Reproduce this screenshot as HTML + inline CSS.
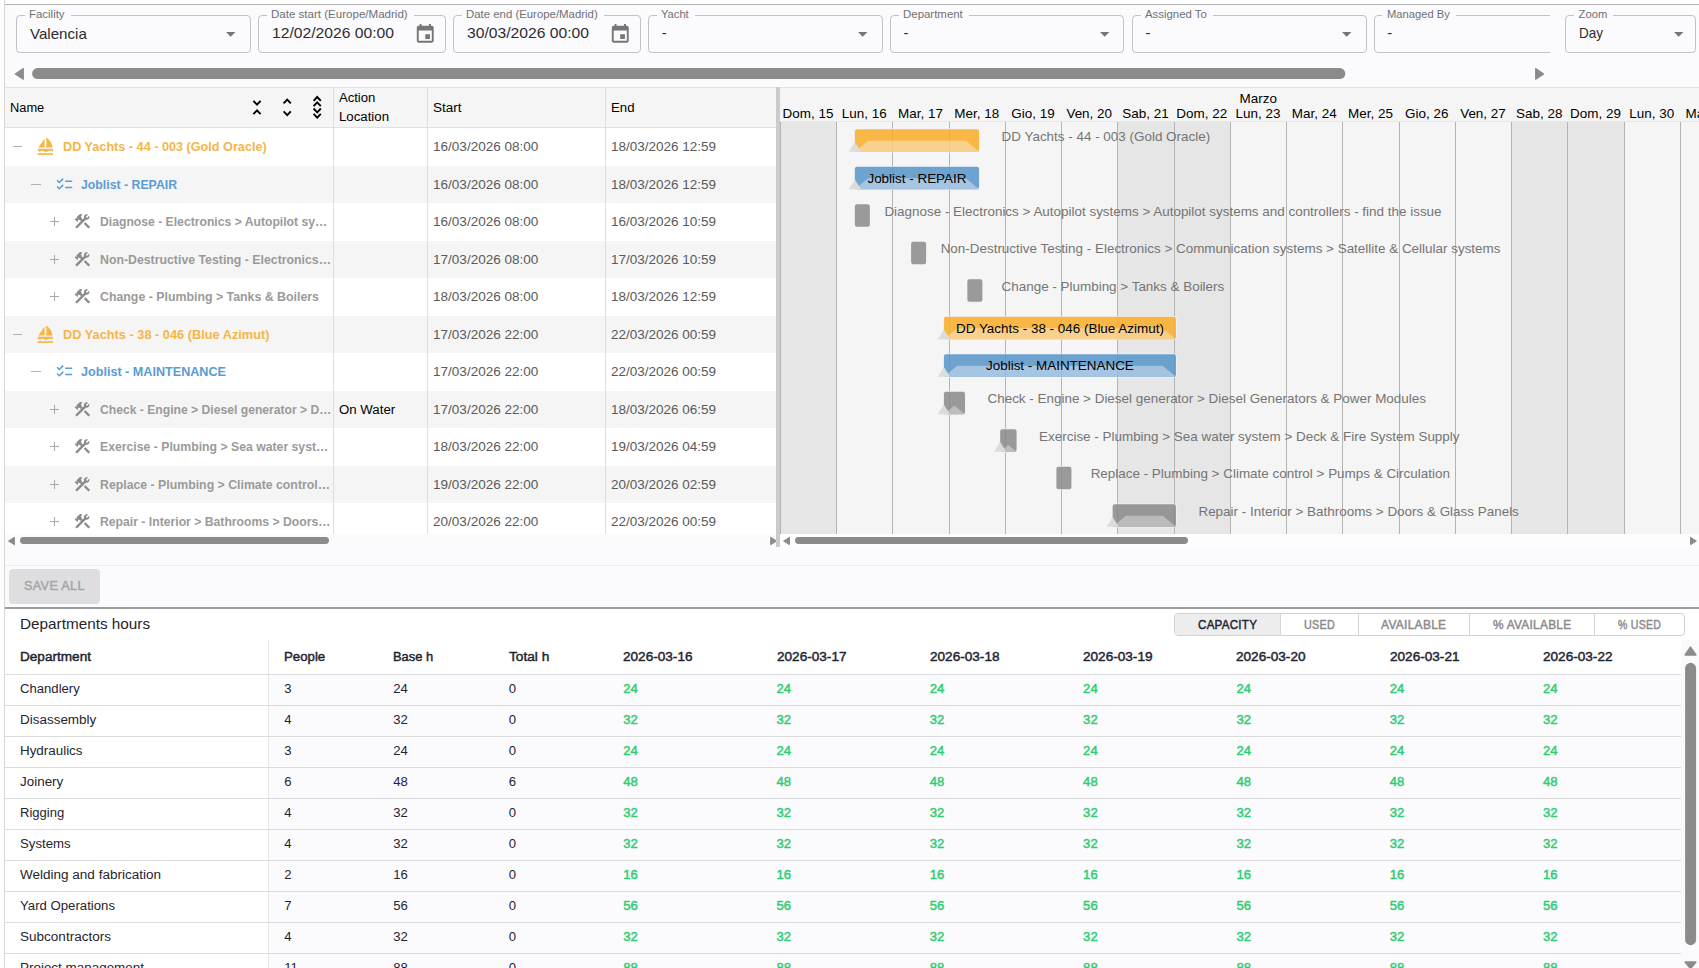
<!DOCTYPE html>
<html lang="en"><head><meta charset="utf-8"><title>Planning</title>
<style>
html,body{margin:0;padding:0;background:#fff;}
body{width:1699px;height:968px;overflow:hidden;position:relative;font-family:"Liberation Sans",sans-serif;}
.t{position:absolute;white-space:pre;}
.abs,.abs>*{position:absolute;}
div{box-sizing:border-box;}
svg{position:absolute;overflow:visible;}
</style></head><body>

<div class="abs" id="panel" style="left:5px;top:4px;width:1694px;height:964px;background:#fbfbfd;border-top:1px solid #b0b0b0;"></div>
<div class="abs" style="left:4px;top:0;width:1px;height:968px;background:#d6d6d6;"></div>
<div id="filters">
<div class="abs" style="left:16.00px;top:15.0px;width:235.20px;height:38.0px;border:1px solid #c2c2c4;border-radius:4px;"></div><div class="abs" style="left:24.90px;top:14.0px;width:46.10px;height:3px;background:#fbfbfd;"></div><span class="t " style="left:29.40px;top:7px;font-size:11.25px;line-height:14.62px;color:#707074;transform:scaleX(1.0167);transform-origin:0 50%;">Facility</span><span class="t " style="left:29.80px;top:24px;font-size:15px;line-height:19.5px;color:#2c2c30;transform:scaleX(1.0064);transform-origin:0 50%;">Valencia</span><svg style="left:226.30px;top:32.1px" width="9.4" height="4.7" viewBox="0 0 10 5"><path d="M0 0L5 5L10 0z" fill="#757575"/></svg>
<div class="abs" style="left:257.90px;top:15.0px;width:188.10px;height:38.0px;border:1px solid #c2c2c4;border-radius:4px;"></div><div class="abs" style="left:266.80px;top:14.0px;width:147.20px;height:3px;background:#fbfbfd;"></div><span class="t " style="left:271.30px;top:7px;font-size:11.25px;line-height:14.62px;color:#707074;transform:scaleX(1.0264);transform-origin:0 50%;">Date start (Europe/Madrid)</span><span class="t " style="left:271.70px;top:23px;font-size:15px;line-height:19.5px;color:#2c2c30;transform:scaleX(1.0451);transform-origin:0 50%;">12/02/2026 00:00</span><svg style="left:414.10px;top:23.05px" width="22.5" height="22.5" viewBox="0 0 24 24"><path fill="#757575" d="M17 12h-5v5h5v-5zM16 1v2H8V1H6v2H5c-1.11 0-1.99.9-1.99 2L3 19c0 1.1.89 2 2 2h14c1.1 0 2-.9 2-2V5c0-1.1-.9-2-2-2h-1V1h-2zm3 18H5V8h14v11z"/></svg>
<div class="abs" style="left:452.90px;top:15.0px;width:188.10px;height:38.0px;border:1px solid #c2c2c4;border-radius:4px;"></div><div class="abs" style="left:461.80px;top:14.0px;width:142.20px;height:3px;background:#fbfbfd;"></div><span class="t " style="left:466.30px;top:7px;font-size:11.25px;line-height:14.62px;color:#707074;transform:scaleX(1.0125);transform-origin:0 50%;">Date end (Europe/Madrid)</span><span class="t " style="left:466.70px;top:23px;font-size:15px;line-height:19.5px;color:#2c2c30;transform:scaleX(1.0451);transform-origin:0 50%;">30/03/2026 00:00</span><svg style="left:609.10px;top:23.05px" width="22.5" height="22.5" viewBox="0 0 24 24"><path fill="#757575" d="M17 12h-5v5h5v-5zM16 1v2H8V1H6v2H5c-1.11 0-1.99.9-1.99 2L3 19c0 1.1.89 2 2 2h14c1.1 0 2-.9 2-2V5c0-1.1-.9-2-2-2h-1V1h-2zm3 18H5V8h14v11z"/></svg>
<div class="abs" style="left:647.90px;top:15.0px;width:235.10px;height:38.0px;border:1px solid #c2c2c4;border-radius:4px;"></div><div class="abs" style="left:656.80px;top:14.0px;width:38.20px;height:3px;background:#fbfbfd;"></div><span class="t " style="left:661.30px;top:7px;font-size:11.25px;line-height:14.62px;color:#707074;transform:scaleX(0.9915);transform-origin:0 50%;">Yacht</span><span class="t " style="left:661.70px;top:23px;font-size:15px;line-height:19.5px;color:#2c2c30;">-</span><svg style="left:858.10px;top:32.1px" width="9.4" height="4.7" viewBox="0 0 10 5"><path d="M0 0L5 5L10 0z" fill="#757575"/></svg>
<div class="abs" style="left:889.80px;top:15.0px;width:234.00px;height:38.0px;border:1px solid #c2c2c4;border-radius:4px;"></div><div class="abs" style="left:898.70px;top:14.0px;width:70.30px;height:3px;background:#fbfbfd;"></div><span class="t " style="left:903.20px;top:7px;font-size:11.25px;line-height:14.62px;color:#707074;transform:scaleX(1.0173);transform-origin:0 50%;">Department</span><span class="t " style="left:903.60px;top:23px;font-size:15px;line-height:19.5px;color:#2c2c30;">-</span><svg style="left:1099.60px;top:32.1px" width="9.4" height="4.7" viewBox="0 0 10 5"><path d="M0 0L5 5L10 0z" fill="#757575"/></svg>
<div class="abs" style="left:1131.70px;top:15.0px;width:235.00px;height:38.0px;border:1px solid #c2c2c4;border-radius:4px;"></div><div class="abs" style="left:1140.60px;top:14.0px;width:72.40px;height:3px;background:#fbfbfd;"></div><span class="t " style="left:1145.10px;top:7px;font-size:11.25px;line-height:14.62px;color:#707074;transform:scaleX(1.0132);transform-origin:0 50%;">Assigned To</span><span class="t " style="left:1145.50px;top:23px;font-size:15px;line-height:19.5px;color:#2c2c30;">-</span><svg style="left:1341.80px;top:32.1px" width="9.4" height="4.7" viewBox="0 0 10 5"><path d="M0 0L5 5L10 0z" fill="#757575"/></svg>
<div class="abs" style="left:1373.50px;top:15.0px;width:176.80px;height:38.0px;overflow:hidden;"><div style="left:0;top:0;width:234.40px;height:38.0px;border:1px solid #c2c2c4;border-radius:4px;position:absolute;"></div></div><div class="abs" style="left:1382.40px;top:14.0px;width:73.30px;height:3px;background:#fbfbfd;"></div><span class="t " style="left:1386.90px;top:7px;font-size:11.25px;line-height:14.62px;color:#707074;transform:scaleX(0.9941);transform-origin:0 50%;">Managed By</span><span class="t " style="left:1387.30px;top:23px;font-size:15px;line-height:19.5px;color:#2c2c30;">-</span>
<div class="abs" style="left:1564.70px;top:15.0px;width:131.30px;height:38.0px;border:1px solid #c2c2c4;border-radius:4px;"></div><div class="abs" style="left:1574.10px;top:14.0px;width:39.30px;height:3px;background:#fbfbfd;"></div><span class="t " style="left:1578.60px;top:7px;font-size:11.25px;line-height:14.62px;color:#707074;">Zoom</span><span class="t " style="left:1579.00px;top:23px;font-size:15px;line-height:19.5px;color:#2c2c30;transform:scaleX(0.8993);transform-origin:0 50%;">Day</span><svg style="left:1674.10px;top:32.1px" width="9.4" height="4.7" viewBox="0 0 10 5"><path d="M0 0L5 5L10 0z" fill="#757575"/></svg>
</div>
<svg id="sb" style="left:0;top:0" width="1699" height="968">
<polygon points="15.30,73.90 23.30,68.60 23.30,79.20" fill="#8b8b8b" stroke="#8b8b8b" stroke-width="1.2" stroke-linejoin="round"/>
<rect x="32.1" y="68.1" width="1313.2" height="11" rx="5.5" fill="#8b8b8b"/>
<polygon points="1543.60,73.90 1535.70,68.60 1535.70,79.20" fill="#8b8b8b" stroke="#8b8b8b" stroke-width="1.2" stroke-linejoin="round"/>
</svg>
<div id="tree" class="abs" style="left:5.0px;top:87.0px;width:771.0px;height:446.80px;overflow:hidden;background:#fff;">
<div style="left:0;top:0;width:100%;height:41.0px;background:#f5f5f5;border-top:1px solid #e2e2e2;border-bottom:1px solid #e0e0e0;"></div>
<div style="left:0;top:79.00px;width:100%;height:37px;background:#f5f5f5;"></div>
<div style="left:0;top:154.00px;width:100%;height:37px;background:#f5f5f5;"></div>
<div style="left:0;top:229.00px;width:100%;height:37px;background:#f5f5f5;"></div>
<div style="left:0;top:304.00px;width:100%;height:37px;background:#f5f5f5;"></div>
<div style="left:0;top:379.00px;width:100%;height:37px;background:#f5f5f5;"></div>
<div style="left:328.20px;top:0;width:1px;height:100%;background:#dedede;"></div>
<div style="left:422.00px;top:0;width:1px;height:100%;background:#dedede;"></div>
<div style="left:600.00px;top:0;width:1px;height:100%;background:#dedede;"></div>
</div>
<div id="treehead">
<span class="t " style="left:10.30px;top:99px;font-size:13.125px;line-height:17.06px;color:#000;transform:scaleX(0.9776);transform-origin:0 50%;">Name</span>
<span class="t " style="left:338.90px;top:89px;font-size:13.125px;line-height:17.06px;color:#000;">Action</span>
<span class="t " style="left:338.90px;top:108px;font-size:13.125px;line-height:17.06px;color:#000;transform:scaleX(1.0085);transform-origin:0 50%;">Location</span>
<span class="t " style="left:432.60px;top:99px;font-size:13.125px;line-height:17.06px;color:#000;transform:scaleX(1.0293);transform-origin:0 50%;">Start</span>
<span class="t " style="left:610.70px;top:99px;font-size:13.125px;line-height:17.06px;color:#000;transform:scaleX(1.0074);transform-origin:0 50%;">End</span>
<svg style="left:0;top:0" width="400" height="130" fill="none" stroke="#000" stroke-width="1.9" stroke-linecap="butt" stroke-linejoin="miter">
<path d="M253.40 100.80L257.00 104.60L260.60 100.80 M253.40 114.20L257.00 110.40L260.60 114.20"/>
<path d="M283.60 103.40L287.20 99.60L290.80 103.40 M283.60 111.40L287.20 115.20L290.80 111.40"/>
<path d="M313.60 100.80L317.20 97.00L320.80 100.80 M313.60 106.20L317.20 102.40L320.80 106.20 M313.60 108.50L317.20 112.30L320.80 108.50 M313.60 113.90L317.20 117.70L320.80 113.90"/>
</svg>
</div>
<div id="treerows" class="abs" style="left:0;top:0;width:776.0px;height:533.8px;overflow:hidden;">
<div style="position:absolute;left:12.60px;top:146.20px;width:9.2px;height:1.1px;background:#b0b0b0;"></div>
<svg style="left:36.20px;top:137.35px" width="18.75" height="18.75" viewBox="0 0 24 24"><path fill="#f5b548" d="M11 13.5V2L3 13.5h8zm10 0C21 6.5 14.5 1 12.5 1c0 0 1 3 1 6.5s-1 6-1 6H21zm1 1.5H2c.31 1.53 1.16 2.84 2.33 3.73.41-.15.83-.3 1.16-.61.69-.63 1.5-.62 2.51-.62 1.05 0 1.8-.01 2.51.62.69.61 1.55.62 2.49.62.93 0 1.79-.01 2.49-.62.7-.63 1.45-.62 2.51-.62.96 0 1.82-.02 2.52.62.32.29.74.46 1.15.6C20.84 17.84 21.69 16.53 22 15zm0 8v-2h-1c-1.04 0-2.08-.35-3-1-1.83 1.3-4.17 1.3-6 0-1.83 1.3-4.17 1.3-6 0-.91.65-1.96 1-3 1H2v2h1c1.03 0 2.05-.25 3-.75 1.89 1 4.11 1 6 0 1.89 1 4.11 1 6 0 .95.5 1.97.75 3 .75h1z"/></svg>
<span class="t " style="left:62.50px;top:138px;font-size:13.125px;line-height:17.06px;color:#f5b548;font-weight:bold;transform:scaleX(0.9652);transform-origin:0 50%;">DD Yachts - 44 - 003 (Gold Oracle)</span>
<span class="t " style="left:432.60px;top:138px;font-size:13.125px;line-height:17.06px;color:#5a5a5a;transform:scaleX(1.0327);transform-origin:0 50%;">16/03/2026 08:00</span>
<span class="t " style="left:610.70px;top:138px;font-size:13.125px;line-height:17.06px;color:#5a5a5a;transform:scaleX(1.0298);transform-origin:0 50%;">18/03/2026 12:59</span>
<div style="position:absolute;left:31.35px;top:184.20px;width:9.2px;height:1.1px;background:#b0b0b0;"></div>
<svg style="left:54.95px;top:175.35px" width="18.75" height="18.75" viewBox="0 0 24 24"><path fill="#5a9bd3" d="M22 7h-9v2h9V7zm0 8h-9v2h9v-2zM5.54 11 2 7.46l1.41-1.41 2.12 2.12 4.24-4.24 1.41 1.41L5.54 11zm0 8L2 15.46l1.41-1.41 2.12 2.12 4.24-4.24 1.41 1.41L5.54 19z"/></svg>
<span class="t " style="left:81.25px;top:176px;font-size:13.125px;line-height:17.06px;color:#5a9bd3;font-weight:bold;transform:scaleX(0.9374);transform-origin:0 50%;">Joblist - REPAIR</span>
<span class="t " style="left:432.60px;top:176px;font-size:13.125px;line-height:17.06px;color:#5a5a5a;transform:scaleX(1.0327);transform-origin:0 50%;">16/03/2026 08:00</span>
<span class="t " style="left:610.70px;top:176px;font-size:13.125px;line-height:17.06px;color:#5a5a5a;transform:scaleX(1.0298);transform-origin:0 50%;">18/03/2026 12:59</span>
<div style="position:absolute;left:50.00px;top:221.20px;width:9.4px;height:1.1px;background:#a8a8a8;"></div>
<div style="position:absolute;left:54.15px;top:217.05px;width:1.1px;height:9.4px;background:#a8a8a8;"></div>
<svg style="left:72.80px;top:212.35px" width="18.75" height="18.75" viewBox="0 0 24 24"><path fill="#8a8a8a" d="m13.783 15.172 2.121-2.121 5.996 5.996-2.121 2.121zM17.5 10c1.93 0 3.5-1.57 3.5-3.5 0-.58-.16-1.12-.41-1.6l-2.7 2.7-1.49-1.49 2.7-2.7c-.48-.25-1.02-.41-1.6-.41C15.57 3 14 4.57 14 6.5c0 .41.08.8.21 1.16l-1.85 1.85-1.78-1.78.71-.71-1.41-1.41L12 3.49c-1.17-1.17-3.07-1.17-4.24 0L4.22 7.03l1.41 1.41H2.81l-.71.71 3.54 3.54.71-.71V9.15l1.41 1.41.71-.71 1.78 1.78-7.41 7.41 2.12 2.12L16.34 9.79c.36.13.75.21 1.16.21z"/></svg>
<span class="t " style="left:100.00px;top:213px;font-size:13.125px;line-height:17.06px;color:#9a9a9a;font-weight:bold;transform:scaleX(0.9287);transform-origin:0 50%;">Diagnose - Electronics &gt; Autopilot sy…</span>
<span class="t " style="left:432.60px;top:213px;font-size:13.125px;line-height:17.06px;color:#5a5a5a;transform:scaleX(1.0327);transform-origin:0 50%;">16/03/2026 08:00</span>
<span class="t " style="left:610.70px;top:213px;font-size:13.125px;line-height:17.06px;color:#5a5a5a;transform:scaleX(1.0298);transform-origin:0 50%;">16/03/2026 10:59</span>
<div style="position:absolute;left:50.00px;top:259.20px;width:9.4px;height:1.1px;background:#a8a8a8;"></div>
<div style="position:absolute;left:54.15px;top:255.05px;width:1.1px;height:9.4px;background:#a8a8a8;"></div>
<svg style="left:72.80px;top:250.35px" width="18.75" height="18.75" viewBox="0 0 24 24"><path fill="#8a8a8a" d="m13.783 15.172 2.121-2.121 5.996 5.996-2.121 2.121zM17.5 10c1.93 0 3.5-1.57 3.5-3.5 0-.58-.16-1.12-.41-1.6l-2.7 2.7-1.49-1.49 2.7-2.7c-.48-.25-1.02-.41-1.6-.41C15.57 3 14 4.57 14 6.5c0 .41.08.8.21 1.16l-1.85 1.85-1.78-1.78.71-.71-1.41-1.41L12 3.49c-1.17-1.17-3.07-1.17-4.24 0L4.22 7.03l1.41 1.41H2.81l-.71.71 3.54 3.54.71-.71V9.15l1.41 1.41.71-.71 1.78 1.78-7.41 7.41 2.12 2.12L16.34 9.79c.36.13.75.21 1.16.21z"/></svg>
<span class="t " style="left:100.00px;top:251px;font-size:13.125px;line-height:17.06px;color:#9a9a9a;font-weight:bold;transform:scaleX(0.9391);transform-origin:0 50%;">Non-Destructive Testing - Electronics…</span>
<span class="t " style="left:432.60px;top:251px;font-size:13.125px;line-height:17.06px;color:#5a5a5a;transform:scaleX(1.0327);transform-origin:0 50%;">17/03/2026 08:00</span>
<span class="t " style="left:610.70px;top:251px;font-size:13.125px;line-height:17.06px;color:#5a5a5a;transform:scaleX(1.0298);transform-origin:0 50%;">17/03/2026 10:59</span>
<div style="position:absolute;left:50.00px;top:296.20px;width:9.4px;height:1.1px;background:#a8a8a8;"></div>
<div style="position:absolute;left:54.15px;top:292.05px;width:1.1px;height:9.4px;background:#a8a8a8;"></div>
<svg style="left:72.80px;top:287.35px" width="18.75" height="18.75" viewBox="0 0 24 24"><path fill="#8a8a8a" d="m13.783 15.172 2.121-2.121 5.996 5.996-2.121 2.121zM17.5 10c1.93 0 3.5-1.57 3.5-3.5 0-.58-.16-1.12-.41-1.6l-2.7 2.7-1.49-1.49 2.7-2.7c-.48-.25-1.02-.41-1.6-.41C15.57 3 14 4.57 14 6.5c0 .41.08.8.21 1.16l-1.85 1.85-1.78-1.78.71-.71-1.41-1.41L12 3.49c-1.17-1.17-3.07-1.17-4.24 0L4.22 7.03l1.41 1.41H2.81l-.71.71 3.54 3.54.71-.71V9.15l1.41 1.41.71-.71 1.78 1.78-7.41 7.41 2.12 2.12L16.34 9.79c.36.13.75.21 1.16.21z"/></svg>
<span class="t " style="left:100.00px;top:288px;font-size:13.125px;line-height:17.06px;color:#9a9a9a;font-weight:bold;transform:scaleX(0.9419);transform-origin:0 50%;">Change - Plumbing &gt; Tanks &amp; Boilers</span>
<span class="t " style="left:432.60px;top:288px;font-size:13.125px;line-height:17.06px;color:#5a5a5a;transform:scaleX(1.0327);transform-origin:0 50%;">18/03/2026 08:00</span>
<span class="t " style="left:610.70px;top:288px;font-size:13.125px;line-height:17.06px;color:#5a5a5a;transform:scaleX(1.0298);transform-origin:0 50%;">18/03/2026 12:59</span>
<div style="position:absolute;left:12.60px;top:334.20px;width:9.2px;height:1.1px;background:#b0b0b0;"></div>
<svg style="left:36.20px;top:325.35px" width="18.75" height="18.75" viewBox="0 0 24 24"><path fill="#f5b548" d="M11 13.5V2L3 13.5h8zm10 0C21 6.5 14.5 1 12.5 1c0 0 1 3 1 6.5s-1 6-1 6H21zm1 1.5H2c.31 1.53 1.16 2.84 2.33 3.73.41-.15.83-.3 1.16-.61.69-.63 1.5-.62 2.51-.62 1.05 0 1.8-.01 2.51.62.69.61 1.55.62 2.49.62.93 0 1.79-.01 2.49-.62.7-.63 1.45-.62 2.51-.62.96 0 1.82-.02 2.52.62.32.29.74.46 1.15.6C20.84 17.84 21.69 16.53 22 15zm0 8v-2h-1c-1.04 0-2.08-.35-3-1-1.83 1.3-4.17 1.3-6 0-1.83 1.3-4.17 1.3-6 0-.91.65-1.96 1-3 1H2v2h1c1.03 0 2.05-.25 3-.75 1.89 1 4.11 1 6 0 1.89 1 4.11 1 6 0 .95.5 1.97.75 3 .75h1z"/></svg>
<span class="t " style="left:62.50px;top:326px;font-size:13.125px;line-height:17.06px;color:#f5b548;font-weight:bold;transform:scaleX(0.9741);transform-origin:0 50%;">DD Yachts - 38 - 046 (Blue Azimut)</span>
<span class="t " style="left:432.60px;top:326px;font-size:13.125px;line-height:17.06px;color:#5a5a5a;transform:scaleX(1.0327);transform-origin:0 50%;">17/03/2026 22:00</span>
<span class="t " style="left:610.70px;top:326px;font-size:13.125px;line-height:17.06px;color:#5a5a5a;transform:scaleX(1.0298);transform-origin:0 50%;">22/03/2026 00:59</span>
<div style="position:absolute;left:31.35px;top:371.20px;width:9.2px;height:1.1px;background:#b0b0b0;"></div>
<svg style="left:54.95px;top:362.35px" width="18.75" height="18.75" viewBox="0 0 24 24"><path fill="#5a9bd3" d="M22 7h-9v2h9V7zm0 8h-9v2h9v-2zM5.54 11 2 7.46l1.41-1.41 2.12 2.12 4.24-4.24 1.41 1.41L5.54 11zm0 8L2 15.46l1.41-1.41 2.12 2.12 4.24-4.24 1.41 1.41L5.54 19z"/></svg>
<span class="t " style="left:81.25px;top:363px;font-size:13.125px;line-height:17.06px;color:#5a9bd3;font-weight:bold;transform:scaleX(0.9614);transform-origin:0 50%;">Joblist - MAINTENANCE</span>
<span class="t " style="left:432.60px;top:363px;font-size:13.125px;line-height:17.06px;color:#5a5a5a;transform:scaleX(1.0327);transform-origin:0 50%;">17/03/2026 22:00</span>
<span class="t " style="left:610.70px;top:363px;font-size:13.125px;line-height:17.06px;color:#5a5a5a;transform:scaleX(1.0298);transform-origin:0 50%;">22/03/2026 00:59</span>
<div style="position:absolute;left:50.00px;top:409.20px;width:9.4px;height:1.1px;background:#a8a8a8;"></div>
<div style="position:absolute;left:54.15px;top:405.05px;width:1.1px;height:9.4px;background:#a8a8a8;"></div>
<svg style="left:72.80px;top:400.35px" width="18.75" height="18.75" viewBox="0 0 24 24"><path fill="#8a8a8a" d="m13.783 15.172 2.121-2.121 5.996 5.996-2.121 2.121zM17.5 10c1.93 0 3.5-1.57 3.5-3.5 0-.58-.16-1.12-.41-1.6l-2.7 2.7-1.49-1.49 2.7-2.7c-.48-.25-1.02-.41-1.6-.41C15.57 3 14 4.57 14 6.5c0 .41.08.8.21 1.16l-1.85 1.85-1.78-1.78.71-.71-1.41-1.41L12 3.49c-1.17-1.17-3.07-1.17-4.24 0L4.22 7.03l1.41 1.41H2.81l-.71.71 3.54 3.54.71-.71V9.15l1.41 1.41.71-.71 1.78 1.78-7.41 7.41 2.12 2.12L16.34 9.79c.36.13.75.21 1.16.21z"/></svg>
<span class="t " style="left:100.00px;top:401px;font-size:13.125px;line-height:17.06px;color:#9a9a9a;font-weight:bold;transform:scaleX(0.9264);transform-origin:0 50%;">Check - Engine &gt; Diesel generator &gt; D…</span>
<span class="t " style="left:339.00px;top:401px;font-size:13.125px;line-height:17.06px;color:#000;transform:scaleX(1.0106);transform-origin:0 50%;">On Water</span>
<span class="t " style="left:432.60px;top:401px;font-size:13.125px;line-height:17.06px;color:#5a5a5a;transform:scaleX(1.0327);transform-origin:0 50%;">17/03/2026 22:00</span>
<span class="t " style="left:610.70px;top:401px;font-size:13.125px;line-height:17.06px;color:#5a5a5a;transform:scaleX(1.0298);transform-origin:0 50%;">18/03/2026 06:59</span>
<div style="position:absolute;left:50.00px;top:446.20px;width:9.4px;height:1.1px;background:#a8a8a8;"></div>
<div style="position:absolute;left:54.15px;top:442.05px;width:1.1px;height:9.4px;background:#a8a8a8;"></div>
<svg style="left:72.80px;top:437.35px" width="18.75" height="18.75" viewBox="0 0 24 24"><path fill="#8a8a8a" d="m13.783 15.172 2.121-2.121 5.996 5.996-2.121 2.121zM17.5 10c1.93 0 3.5-1.57 3.5-3.5 0-.58-.16-1.12-.41-1.6l-2.7 2.7-1.49-1.49 2.7-2.7c-.48-.25-1.02-.41-1.6-.41C15.57 3 14 4.57 14 6.5c0 .41.08.8.21 1.16l-1.85 1.85-1.78-1.78.71-.71-1.41-1.41L12 3.49c-1.17-1.17-3.07-1.17-4.24 0L4.22 7.03l1.41 1.41H2.81l-.71.71 3.54 3.54.71-.71V9.15l1.41 1.41.71-.71 1.78 1.78-7.41 7.41 2.12 2.12L16.34 9.79c.36.13.75.21 1.16.21z"/></svg>
<span class="t " style="left:100.00px;top:438px;font-size:13.125px;line-height:17.06px;color:#9a9a9a;font-weight:bold;transform:scaleX(0.9339);transform-origin:0 50%;">Exercise - Plumbing &gt; Sea water syst…</span>
<span class="t " style="left:432.60px;top:438px;font-size:13.125px;line-height:17.06px;color:#5a5a5a;transform:scaleX(1.0327);transform-origin:0 50%;">18/03/2026 22:00</span>
<span class="t " style="left:610.70px;top:438px;font-size:13.125px;line-height:17.06px;color:#5a5a5a;transform:scaleX(1.0298);transform-origin:0 50%;">19/03/2026 04:59</span>
<div style="position:absolute;left:50.00px;top:484.20px;width:9.4px;height:1.1px;background:#a8a8a8;"></div>
<div style="position:absolute;left:54.15px;top:480.05px;width:1.1px;height:9.4px;background:#a8a8a8;"></div>
<svg style="left:72.80px;top:475.35px" width="18.75" height="18.75" viewBox="0 0 24 24"><path fill="#8a8a8a" d="m13.783 15.172 2.121-2.121 5.996 5.996-2.121 2.121zM17.5 10c1.93 0 3.5-1.57 3.5-3.5 0-.58-.16-1.12-.41-1.6l-2.7 2.7-1.49-1.49 2.7-2.7c-.48-.25-1.02-.41-1.6-.41C15.57 3 14 4.57 14 6.5c0 .41.08.8.21 1.16l-1.85 1.85-1.78-1.78.71-.71-1.41-1.41L12 3.49c-1.17-1.17-3.07-1.17-4.24 0L4.22 7.03l1.41 1.41H2.81l-.71.71 3.54 3.54.71-.71V9.15l1.41 1.41.71-.71 1.78 1.78-7.41 7.41 2.12 2.12L16.34 9.79c.36.13.75.21 1.16.21z"/></svg>
<span class="t " style="left:100.00px;top:476px;font-size:13.125px;line-height:17.06px;color:#9a9a9a;font-weight:bold;transform:scaleX(0.9383);transform-origin:0 50%;">Replace - Plumbing &gt; Climate control…</span>
<span class="t " style="left:432.60px;top:476px;font-size:13.125px;line-height:17.06px;color:#5a5a5a;transform:scaleX(1.0327);transform-origin:0 50%;">19/03/2026 22:00</span>
<span class="t " style="left:610.70px;top:476px;font-size:13.125px;line-height:17.06px;color:#5a5a5a;transform:scaleX(1.0298);transform-origin:0 50%;">20/03/2026 02:59</span>
<div style="position:absolute;left:50.00px;top:521.20px;width:9.4px;height:1.1px;background:#a8a8a8;"></div>
<div style="position:absolute;left:54.15px;top:517.05px;width:1.1px;height:9.4px;background:#a8a8a8;"></div>
<svg style="left:72.80px;top:512.35px" width="18.75" height="18.75" viewBox="0 0 24 24"><path fill="#8a8a8a" d="m13.783 15.172 2.121-2.121 5.996 5.996-2.121 2.121zM17.5 10c1.93 0 3.5-1.57 3.5-3.5 0-.58-.16-1.12-.41-1.6l-2.7 2.7-1.49-1.49 2.7-2.7c-.48-.25-1.02-.41-1.6-.41C15.57 3 14 4.57 14 6.5c0 .41.08.8.21 1.16l-1.85 1.85-1.78-1.78.71-.71-1.41-1.41L12 3.49c-1.17-1.17-3.07-1.17-4.24 0L4.22 7.03l1.41 1.41H2.81l-.71.71 3.54 3.54.71-.71V9.15l1.41 1.41.71-.71 1.78 1.78-7.41 7.41 2.12 2.12L16.34 9.79c.36.13.75.21 1.16.21z"/></svg>
<span class="t " style="left:100.00px;top:513px;font-size:13.125px;line-height:17.06px;color:#9a9a9a;font-weight:bold;transform:scaleX(0.9307);transform-origin:0 50%;">Repair - Interior &gt; Bathrooms &gt; Doors…</span>
<span class="t " style="left:432.60px;top:513px;font-size:13.125px;line-height:17.06px;color:#5a5a5a;transform:scaleX(1.0327);transform-origin:0 50%;">20/03/2026 22:00</span>
<span class="t " style="left:610.70px;top:513px;font-size:13.125px;line-height:17.06px;color:#5a5a5a;transform:scaleX(1.0298);transform-origin:0 50%;">22/03/2026 00:59</span>
</div>
<svg style="left:0;top:0" width="1699" height="968">
<polygon points="8.50,541.00 14.40,537.30 14.40,544.70" fill="#8b8b8b" stroke="#8b8b8b" stroke-width="1.0" stroke-linejoin="round"/>
<rect x="20.0" y="537.1" width="309" height="6.9" rx="3.45" fill="#8b8b8b"/>
<polygon points="776.60,541.00 770.70,537.30 770.70,544.70" fill="#8b8b8b" stroke="#8b8b8b" stroke-width="1.0" stroke-linejoin="round"/>
</svg>
<div id="gantt" class="abs" style="left:780px;top:87.0px;width:919px;height:446.80px;overflow:hidden;background:#f5f5f5;">
<div style="left:0;top:0;width:100%;height:1px;background:#e2e2e2;"></div>
<div style="left:0;top:33.95px;width:100%;height:1px;background:#e6e6e6;"></div>
<div style="left:-0.15px;top:34.75px;width:56.25px;height:500px;background:#e6e6e6;"></div>
<div style="left:337.35px;top:34.75px;width:56.25px;height:500px;background:#e6e6e6;"></div>
<div style="left:393.60px;top:34.75px;width:56.25px;height:500px;background:#e6e6e6;"></div>
<div style="left:731.10px;top:34.75px;width:56.25px;height:500px;background:#e6e6e6;"></div>
<div style="left:787.35px;top:34.75px;width:56.25px;height:500px;background:#e6e6e6;"></div>
<div style="left:-0.25px;top:34.75px;width:1.1px;height:500px;background:#b4b4b4;"></div>
<div style="left:56.00px;top:34.75px;width:1.1px;height:500px;background:#b4b4b4;"></div>
<div style="left:112.25px;top:34.75px;width:1.1px;height:500px;background:#b4b4b4;"></div>
<div style="left:168.50px;top:34.75px;width:1.1px;height:500px;background:#b4b4b4;"></div>
<div style="left:224.75px;top:34.75px;width:1.1px;height:500px;background:#b4b4b4;"></div>
<div style="left:281.00px;top:34.75px;width:1.1px;height:500px;background:#b4b4b4;"></div>
<div style="left:337.25px;top:34.75px;width:1.1px;height:500px;background:#b4b4b4;"></div>
<div style="left:393.50px;top:34.75px;width:1.1px;height:500px;background:#b4b4b4;"></div>
<div style="left:449.75px;top:34.75px;width:1.1px;height:500px;background:#b4b4b4;"></div>
<div style="left:506.00px;top:34.75px;width:1.1px;height:500px;background:#b4b4b4;"></div>
<div style="left:562.25px;top:34.75px;width:1.1px;height:500px;background:#b4b4b4;"></div>
<div style="left:618.50px;top:34.75px;width:1.1px;height:500px;background:#b4b4b4;"></div>
<div style="left:674.75px;top:34.75px;width:1.1px;height:500px;background:#b4b4b4;"></div>
<div style="left:731.00px;top:34.75px;width:1.1px;height:500px;background:#b4b4b4;"></div>
<div style="left:787.25px;top:34.75px;width:1.1px;height:500px;background:#b4b4b4;"></div>
<div style="left:843.50px;top:34.75px;width:1.1px;height:500px;background:#b4b4b4;"></div>
<div style="left:899.75px;top:34.75px;width:1.1px;height:500px;background:#b4b4b4;"></div>
<div style="left:956.00px;top:34.75px;width:1.1px;height:500px;background:#b4b4b4;"></div>
</div>
<div id="ghead" class="abs" style="left:780px;top:87px;width:919px;height:35px;overflow:hidden;">
<span class="t " style="left:27.98px;top:18px;font-size:13.44px;line-height:17.47px;color:#000;transform:translateX(-50%);transform-origin:0 50%;">Dom, 15</span>
<span class="t " style="left:84.23px;top:18px;font-size:13.44px;line-height:17.47px;color:#000;transform:translateX(-50%);transform-origin:0 50%;">Lun, 16</span>
<span class="t " style="left:140.48px;top:18px;font-size:13.44px;line-height:17.47px;color:#000;transform:translateX(-50%);transform-origin:0 50%;">Mar, 17</span>
<span class="t " style="left:196.73px;top:18px;font-size:13.44px;line-height:17.47px;color:#000;transform:translateX(-50%);transform-origin:0 50%;">Mer, 18</span>
<span class="t " style="left:252.97px;top:18px;font-size:13.44px;line-height:17.47px;color:#000;transform:translateX(-50%);transform-origin:0 50%;">Gio, 19</span>
<span class="t " style="left:309.22px;top:18px;font-size:13.44px;line-height:17.47px;color:#000;transform:translateX(-50%);transform-origin:0 50%;">Ven, 20</span>
<span class="t " style="left:365.47px;top:18px;font-size:13.44px;line-height:17.47px;color:#000;transform:translateX(-50%);transform-origin:0 50%;">Sab, 21</span>
<span class="t " style="left:421.72px;top:18px;font-size:13.44px;line-height:17.47px;color:#000;transform:translateX(-50%);transform-origin:0 50%;">Dom, 22</span>
<span class="t " style="left:477.97px;top:18px;font-size:13.44px;line-height:17.47px;color:#000;transform:translateX(-50%);transform-origin:0 50%;">Lun, 23</span>
<span class="t " style="left:534.22px;top:18px;font-size:13.44px;line-height:17.47px;color:#000;transform:translateX(-50%);transform-origin:0 50%;">Mar, 24</span>
<span class="t " style="left:590.47px;top:18px;font-size:13.44px;line-height:17.47px;color:#000;transform:translateX(-50%);transform-origin:0 50%;">Mer, 25</span>
<span class="t " style="left:646.72px;top:18px;font-size:13.44px;line-height:17.47px;color:#000;transform:translateX(-50%);transform-origin:0 50%;">Gio, 26</span>
<span class="t " style="left:702.97px;top:18px;font-size:13.44px;line-height:17.47px;color:#000;transform:translateX(-50%);transform-origin:0 50%;">Ven, 27</span>
<span class="t " style="left:759.22px;top:18px;font-size:13.44px;line-height:17.47px;color:#000;transform:translateX(-50%);transform-origin:0 50%;">Sab, 28</span>
<span class="t " style="left:815.47px;top:18px;font-size:13.44px;line-height:17.47px;color:#000;transform:translateX(-50%);transform-origin:0 50%;">Dom, 29</span>
<span class="t " style="left:871.72px;top:18px;font-size:13.44px;line-height:17.47px;color:#000;transform:translateX(-50%);transform-origin:0 50%;">Lun, 30</span>
<span class="t " style="left:927.97px;top:18px;font-size:13.44px;line-height:17.47px;color:#000;transform:translateX(-50%);transform-origin:0 50%;">Mar, 31</span>
<span class="t " style="left:984.22px;top:18px;font-size:13.44px;line-height:17.47px;color:#000;transform:translateX(-50%);transform-origin:0 50%;">Mer, 01</span>
<span class="t " style="left:459.60px;top:3px;font-size:13.44px;line-height:17.47px;color:#000;">Marzo</span>
</div>
<div id="gbars" class="abs" style="left:780px;top:121px;width:919px;height:412.80px;overflow:hidden;">
<svg style="left:0;top:0" width="919" height="412.80">
<rect x="74.55" y="7.95" width="124.82" height="23.1" rx="2.5" fill="none" stroke="#f2f3f9" stroke-width="1"/>
<g opacity="0.86"><rect x="74.85" y="8.25" width="124.22" height="22.5" rx="2.2" fill="#faaf2a"/>
<polygon points="74.85,30.75 88.05,19.75 185.87,19.75 199.07,30.75" fill="#f8cc7d"/>
</g>
<polygon points="68.75,30.75 74.85,20.95 80.95,30.75" fill="#dcdcdc"/>
<rect x="74.55" y="45.45" width="124.82" height="23.1" rx="2.5" fill="none" stroke="#f2f3f9" stroke-width="1"/>
<g opacity="0.86"><rect x="74.85" y="45.75" width="124.22" height="22.5" rx="2.2" fill="#5896ca"/>
<polygon points="74.85,68.25 88.05,57.25 185.87,57.25 199.07,68.25" fill="#99bedf"/>
</g>
<polygon points="68.75,68.25 74.85,58.45 80.95,68.25" fill="#dcdcdc"/>
<rect x="74.55" y="82.95" width="15.60" height="23.1" rx="2.5" fill="none" stroke="#f2f3f9" stroke-width="1"/>
<g opacity="0.86"><rect x="74.85" y="83.25" width="15.00" height="22.5" rx="2.2" fill="#8a8a8a"/>
</g>
<rect x="130.80" y="120.45" width="15.60" height="23.1" rx="2.5" fill="none" stroke="#f2f3f9" stroke-width="1"/>
<g opacity="0.86"><rect x="131.10" y="120.75" width="15.00" height="22.5" rx="2.2" fill="#8a8a8a"/>
</g>
<rect x="187.05" y="157.95" width="15.60" height="23.1" rx="2.5" fill="none" stroke="#f2f3f9" stroke-width="1"/>
<g opacity="0.86"><rect x="187.35" y="158.25" width="15.00" height="22.5" rx="2.2" fill="#8a8a8a"/>
</g>
<rect x="163.61" y="195.45" width="232.63" height="23.1" rx="2.5" fill="none" stroke="#f2f3f9" stroke-width="1"/>
<g opacity="0.86"><rect x="163.91" y="195.75" width="232.03" height="22.5" rx="2.2" fill="#faaf2a"/>
<polygon points="163.91,218.25 177.11,207.25 382.74,207.25 395.94,218.25" fill="#f8cc7d"/>
</g>
<polygon points="157.81,218.25 163.91,208.45 170.01,218.25" fill="#dcdcdc"/>
<rect x="163.61" y="232.95" width="232.63" height="23.1" rx="2.5" fill="none" stroke="#f2f3f9" stroke-width="1"/>
<g opacity="0.86"><rect x="163.91" y="233.25" width="232.03" height="22.5" rx="2.2" fill="#5896ca"/>
<polygon points="163.91,255.75 177.11,244.75 382.74,244.75 395.94,255.75" fill="#99bedf"/>
</g>
<polygon points="157.81,255.75 163.91,245.95 170.01,255.75" fill="#dcdcdc"/>
<rect x="163.61" y="270.45" width="21.69" height="23.1" rx="2.5" fill="none" stroke="#f2f3f9" stroke-width="1"/>
<g opacity="0.86"><rect x="163.91" y="270.75" width="21.09" height="22.5" rx="2.2" fill="#8a8a8a"/>
<polygon points="163.91,293.25 174.46,284.46 185.01,293.25" fill="#b4b4b4"/>
</g>
<polygon points="157.81,293.25 163.91,283.45 170.01,293.25" fill="#dcdcdc"/>
<rect x="219.86" y="307.95" width="17.01" height="23.1" rx="2.5" fill="none" stroke="#f2f3f9" stroke-width="1"/>
<g opacity="0.86"><rect x="220.16" y="308.25" width="16.41" height="22.5" rx="2.2" fill="#8a8a8a"/>
<polygon points="220.16,330.75 228.37,323.91 236.57,330.75" fill="#b4b4b4"/>
</g>
<polygon points="214.06,330.75 220.16,320.95 226.26,330.75" fill="#dcdcdc"/>
<rect x="276.11" y="345.45" width="15.60" height="23.1" rx="2.5" fill="none" stroke="#f2f3f9" stroke-width="1"/>
<g opacity="0.86"><rect x="276.41" y="345.75" width="15.00" height="22.5" rx="2.2" fill="#8a8a8a"/>
</g>
<rect x="332.36" y="382.95" width="63.88" height="23.1" rx="2.5" fill="none" stroke="#f2f3f9" stroke-width="1"/>
<g opacity="0.86"><rect x="332.66" y="383.25" width="63.28" height="22.5" rx="2.2" fill="#8a8a8a"/>
<polygon points="332.66,405.75 345.86,394.75 382.74,394.75 395.94,405.75" fill="#b4b4b4"/>
</g>
<polygon points="326.56,405.75 332.66,395.95 338.76,405.75" fill="#dcdcdc"/>
</svg>
<span class="t " style="left:221.57px;top:7px;font-size:13.44px;line-height:17.47px;color:#747474;">DD Yachts - 44 - 003 (Gold Oracle)</span>
<span class="t " style="left:136.96px;top:49px;font-size:13.44px;line-height:17.47px;color:#000;transform:translateX(-50%);transform-origin:0 50%;">Joblist - REPAIR</span>
<span class="t " style="left:104.38px;top:82px;font-size:13.44px;line-height:17.47px;color:#747474;">Diagnose - Electronics &gt; Autopilot systems &gt; Autopilot systems and controllers - find the issue</span>
<span class="t " style="left:160.63px;top:119px;font-size:13.44px;line-height:17.47px;color:#747474;">Non-Destructive Testing - Electronics &gt; Communication systems &gt; Satellite &amp; Cellular systems</span>
<span class="t " style="left:221.57px;top:157px;font-size:13.44px;line-height:17.47px;color:#747474;">Change - Plumbing &gt; Tanks &amp; Boilers</span>
<span class="t " style="left:279.93px;top:199px;font-size:13.44px;line-height:17.47px;color:#000;transform:translateX(-50%);transform-origin:0 50%;">DD Yachts - 38 - 046 (Blue Azimut)</span>
<span class="t " style="left:279.93px;top:236px;font-size:13.44px;line-height:17.47px;color:#000;transform:translateX(-50%);transform-origin:0 50%;">Joblist - MAINTENANCE</span>
<span class="t " style="left:207.51px;top:269px;font-size:13.44px;line-height:17.47px;color:#747474;">Check - Engine &gt; Diesel generator &gt; Diesel Generators &amp; Power Modules</span>
<span class="t " style="left:259.07px;top:307px;font-size:13.44px;line-height:17.47px;color:#747474;">Exercise - Plumbing &gt; Sea water system &gt; Deck &amp; Fire System Supply</span>
<span class="t " style="left:310.63px;top:344px;font-size:13.44px;line-height:17.47px;color:#747474;">Replace - Plumbing &gt; Climate control &gt; Pumps &amp; Circulation</span>
<span class="t " style="left:418.44px;top:382px;font-size:13.44px;line-height:17.47px;color:#747474;">Repair - Interior &gt; Bathrooms &gt; Doors &amp; Glass Panels</span>
</div>
<div class="abs" style="left:776px;top:87.0px;width:4px;height:460.0px;background:#cbcbcb;"></div>
<div class="abs" style="left:780px;top:533.8px;width:919px;height:13.5px;background:#fdfdfd;"></div>
<svg style="left:0;top:0" width="1699" height="968">
<polygon points="783.60,541.00 789.50,537.30 789.50,544.70" fill="#8b8b8b" stroke="#8b8b8b" stroke-width="1.0" stroke-linejoin="round"/>
<rect x="795.0" y="537.1" width="393" height="6.9" rx="3.45" fill="#8b8b8b"/>
<polygon points="1696.40,541.00 1690.50,537.30 1690.50,544.70" fill="#8b8b8b" stroke="#8b8b8b" stroke-width="1.0" stroke-linejoin="round"/>
</svg>
<div class="abs" style="left:5px;top:565px;width:1694px;height:1px;background:#ececee;"></div>
<div class="abs" style="left:9px;top:569.1px;width:90.8px;height:34.8px;background:#dedee0;border-radius:4px;"></div>
<span class="t " style="left:24.00px;top:579px;font-size:12.19px;line-height:15.85px;color:#a6a6a8;letter-spacing:0.3px;-webkit-text-stroke:0.45px #a6a6a8;transform:scaleX(1.0408);transform-origin:0 50%;">SAVE ALL</span>
<div class="abs" style="left:5px;top:607px;width:1694px;height:361px;background:#fff;border-top:2px solid #9c9c9c;"></div>
<span class="t " style="left:20.00px;top:614px;font-size:15px;line-height:19.5px;color:#1f2430;transform:scaleX(1.0199);transform-origin:0 50%;">Departments hours</span>
<div class="abs" style="left:1174.2px;top:613.0px;width:510.6px;height:22.8px;border:1px solid #d2d2d4;border-radius:4px;background:#fff;overflow:hidden;"><div style="left:0;top:0;width:105.6px;height:100%;background:#ededed;"></div><div style="left:104.90px;top:0;width:1px;height:100%;background:#d6d6d8;"></div><div style="left:182.90px;top:0;width:1px;height:100%;background:#d6d6d8;"></div><div style="left:293.90px;top:0;width:1px;height:100%;background:#d6d6d8;"></div><div style="left:418.60px;top:0;width:1px;height:100%;background:#d6d6d8;"></div></div>
<span class="t " style="left:1197.90px;top:618px;font-size:12.19px;line-height:15.85px;color:#1f2430;letter-spacing:0.3px;-webkit-text-stroke:0.45px #1f2430;transform:scaleX(0.9480);transform-origin:0 50%;">CAPACITY</span>
<span class="t " style="left:1303.70px;top:618px;font-size:12.19px;line-height:15.85px;color:#8a8a8c;letter-spacing:0.3px;-webkit-text-stroke:0.45px #8a8a8c;transform:scaleX(0.8838);transform-origin:0 50%;">USED</span>
<span class="t " style="left:1381.40px;top:618px;font-size:12.19px;line-height:15.85px;color:#8a8a8c;letter-spacing:0.3px;-webkit-text-stroke:0.45px #8a8a8c;transform:scaleX(0.9817);transform-origin:0 50%;">AVAILABLE</span>
<span class="t " style="left:1493.10px;top:618px;font-size:12.19px;line-height:15.85px;color:#8a8a8c;letter-spacing:0.3px;-webkit-text-stroke:0.45px #8a8a8c;transform:scaleX(0.9707);transform-origin:0 50%;">% AVAILABLE</span>
<span class="t " style="left:1617.80px;top:618px;font-size:12.19px;line-height:15.85px;color:#8a8a8c;letter-spacing:0.3px;-webkit-text-stroke:0.45px #8a8a8c;transform:scaleX(0.8638);transform-origin:0 50%;">% USED</span>
<div id="dept" class="abs" style="left:5px;top:640.0px;width:1676.3px;height:328.0px;overflow:hidden;">
<div style="left:263.90px;top:34.90px;width:1500px;height:400px;background:#fbfbfd;"></div>
<div style="left:262.90px;top:0;width:1px;height:400px;background:#e4e4e6;"></div>
<div style="left:0;top:33.90px;width:100%;height:1px;background:#dcdcde;"></div>
<div style="left:0;top:64.90px;width:100%;height:1px;background:#dcdcde;"></div>
<div style="left:0;top:95.90px;width:100%;height:1px;background:#dcdcde;"></div>
<div style="left:0;top:126.90px;width:100%;height:1px;background:#dcdcde;"></div>
<div style="left:0;top:157.90px;width:100%;height:1px;background:#dcdcde;"></div>
<div style="left:0;top:188.90px;width:100%;height:1px;background:#dcdcde;"></div>
<div style="left:0;top:219.90px;width:100%;height:1px;background:#dcdcde;"></div>
<div style="left:0;top:250.90px;width:100%;height:1px;background:#dcdcde;"></div>
<div style="left:0;top:281.90px;width:100%;height:1px;background:#dcdcde;"></div>
<div style="left:0;top:312.90px;width:100%;height:1px;background:#dcdcde;"></div>
<div style="left:0;top:343.90px;width:100%;height:1px;background:#dcdcde;"></div>
</div>
<span class="t " style="left:20.00px;top:648px;font-size:13.125px;line-height:17.06px;color:#1f2430;-webkit-text-stroke:0.45px #1f2430;transform:scaleX(1.0365);transform-origin:0 50%;">Department</span>
<span class="t " style="left:284.20px;top:648px;font-size:13.125px;line-height:17.06px;color:#1f2430;-webkit-text-stroke:0.45px #1f2430;transform:scaleX(1.0091);transform-origin:0 50%;">People</span>
<span class="t " style="left:393.30px;top:648px;font-size:13.125px;line-height:17.06px;color:#1f2430;-webkit-text-stroke:0.45px #1f2430;transform:scaleX(0.9846);transform-origin:0 50%;">Base h</span>
<span class="t " style="left:508.70px;top:648px;font-size:13.125px;line-height:17.06px;color:#1f2430;-webkit-text-stroke:0.45px #1f2430;transform:scaleX(1.0434);transform-origin:0 50%;">Total h</span>
<span class="t " style="left:623.20px;top:648px;font-size:13.125px;line-height:17.06px;color:#1f2430;-webkit-text-stroke:0.45px #1f2430;transform:scaleX(1.0363);transform-origin:0 50%;">2026-03-16</span>
<span class="t " style="left:776.50px;top:648px;font-size:13.125px;line-height:17.06px;color:#1f2430;-webkit-text-stroke:0.45px #1f2430;transform:scaleX(1.0363);transform-origin:0 50%;">2026-03-17</span>
<span class="t " style="left:929.80px;top:648px;font-size:13.125px;line-height:17.06px;color:#1f2430;-webkit-text-stroke:0.45px #1f2430;transform:scaleX(1.0363);transform-origin:0 50%;">2026-03-18</span>
<span class="t " style="left:1083.10px;top:648px;font-size:13.125px;line-height:17.06px;color:#1f2430;-webkit-text-stroke:0.45px #1f2430;transform:scaleX(1.0363);transform-origin:0 50%;">2026-03-19</span>
<span class="t " style="left:1236.40px;top:648px;font-size:13.125px;line-height:17.06px;color:#1f2430;-webkit-text-stroke:0.45px #1f2430;transform:scaleX(1.0363);transform-origin:0 50%;">2026-03-20</span>
<span class="t " style="left:1389.70px;top:648px;font-size:13.125px;line-height:17.06px;color:#1f2430;-webkit-text-stroke:0.45px #1f2430;transform:scaleX(1.0363);transform-origin:0 50%;">2026-03-21</span>
<span class="t " style="left:1543.00px;top:648px;font-size:13.125px;line-height:17.06px;color:#1f2430;-webkit-text-stroke:0.45px #1f2430;transform:scaleX(1.0363);transform-origin:0 50%;">2026-03-22</span>
<div id="deptrows" class="abs" style="left:0;top:674.4px;width:1699px;height:293.6px;overflow:hidden;">
<span class="t " style="left:20.00px;top:6px;font-size:13.125px;line-height:17.06px;color:#1f2430;">Chandlery</span>
<span class="t " style="left:284.20px;top:6px;font-size:13.125px;line-height:17.06px;color:#1f2430;">3</span>
<span class="t " style="left:393.30px;top:6px;font-size:13.125px;line-height:17.06px;color:#1f2430;">24</span>
<span class="t " style="left:508.70px;top:6px;font-size:13.125px;line-height:17.06px;color:#1f2430;">0</span>
<span class="t " style="left:623.20px;top:6px;font-size:13.125px;line-height:17.06px;color:#2ecc71;-webkit-text-stroke:0.45px #2ecc71;">24</span>
<span class="t " style="left:776.50px;top:6px;font-size:13.125px;line-height:17.06px;color:#2ecc71;-webkit-text-stroke:0.45px #2ecc71;">24</span>
<span class="t " style="left:929.80px;top:6px;font-size:13.125px;line-height:17.06px;color:#2ecc71;-webkit-text-stroke:0.45px #2ecc71;">24</span>
<span class="t " style="left:1083.10px;top:6px;font-size:13.125px;line-height:17.06px;color:#2ecc71;-webkit-text-stroke:0.45px #2ecc71;">24</span>
<span class="t " style="left:1236.40px;top:6px;font-size:13.125px;line-height:17.06px;color:#2ecc71;-webkit-text-stroke:0.45px #2ecc71;">24</span>
<span class="t " style="left:1389.70px;top:6px;font-size:13.125px;line-height:17.06px;color:#2ecc71;-webkit-text-stroke:0.45px #2ecc71;">24</span>
<span class="t " style="left:1543.00px;top:6px;font-size:13.125px;line-height:17.06px;color:#2ecc71;-webkit-text-stroke:0.45px #2ecc71;">24</span>
<span class="t " style="left:20.00px;top:37px;font-size:13.125px;line-height:17.06px;color:#1f2430;transform:scaleX(1.0267);transform-origin:0 50%;">Disassembly</span>
<span class="t " style="left:284.20px;top:37px;font-size:13.125px;line-height:17.06px;color:#1f2430;">4</span>
<span class="t " style="left:393.30px;top:37px;font-size:13.125px;line-height:17.06px;color:#1f2430;">32</span>
<span class="t " style="left:508.70px;top:37px;font-size:13.125px;line-height:17.06px;color:#1f2430;">0</span>
<span class="t " style="left:623.20px;top:37px;font-size:13.125px;line-height:17.06px;color:#2ecc71;-webkit-text-stroke:0.45px #2ecc71;">32</span>
<span class="t " style="left:776.50px;top:37px;font-size:13.125px;line-height:17.06px;color:#2ecc71;-webkit-text-stroke:0.45px #2ecc71;">32</span>
<span class="t " style="left:929.80px;top:37px;font-size:13.125px;line-height:17.06px;color:#2ecc71;-webkit-text-stroke:0.45px #2ecc71;">32</span>
<span class="t " style="left:1083.10px;top:37px;font-size:13.125px;line-height:17.06px;color:#2ecc71;-webkit-text-stroke:0.45px #2ecc71;">32</span>
<span class="t " style="left:1236.40px;top:37px;font-size:13.125px;line-height:17.06px;color:#2ecc71;-webkit-text-stroke:0.45px #2ecc71;">32</span>
<span class="t " style="left:1389.70px;top:37px;font-size:13.125px;line-height:17.06px;color:#2ecc71;-webkit-text-stroke:0.45px #2ecc71;">32</span>
<span class="t " style="left:1543.00px;top:37px;font-size:13.125px;line-height:17.06px;color:#2ecc71;-webkit-text-stroke:0.45px #2ecc71;">32</span>
<span class="t " style="left:20.00px;top:68px;font-size:13.125px;line-height:17.06px;color:#1f2430;transform:scaleX(1.0212);transform-origin:0 50%;">Hydraulics</span>
<span class="t " style="left:284.20px;top:68px;font-size:13.125px;line-height:17.06px;color:#1f2430;">3</span>
<span class="t " style="left:393.30px;top:68px;font-size:13.125px;line-height:17.06px;color:#1f2430;">24</span>
<span class="t " style="left:508.70px;top:68px;font-size:13.125px;line-height:17.06px;color:#1f2430;">0</span>
<span class="t " style="left:623.20px;top:68px;font-size:13.125px;line-height:17.06px;color:#2ecc71;-webkit-text-stroke:0.45px #2ecc71;">24</span>
<span class="t " style="left:776.50px;top:68px;font-size:13.125px;line-height:17.06px;color:#2ecc71;-webkit-text-stroke:0.45px #2ecc71;">24</span>
<span class="t " style="left:929.80px;top:68px;font-size:13.125px;line-height:17.06px;color:#2ecc71;-webkit-text-stroke:0.45px #2ecc71;">24</span>
<span class="t " style="left:1083.10px;top:68px;font-size:13.125px;line-height:17.06px;color:#2ecc71;-webkit-text-stroke:0.45px #2ecc71;">24</span>
<span class="t " style="left:1236.40px;top:68px;font-size:13.125px;line-height:17.06px;color:#2ecc71;-webkit-text-stroke:0.45px #2ecc71;">24</span>
<span class="t " style="left:1389.70px;top:68px;font-size:13.125px;line-height:17.06px;color:#2ecc71;-webkit-text-stroke:0.45px #2ecc71;">24</span>
<span class="t " style="left:1543.00px;top:68px;font-size:13.125px;line-height:17.06px;color:#2ecc71;-webkit-text-stroke:0.45px #2ecc71;">24</span>
<span class="t " style="left:20.00px;top:99px;font-size:13.125px;line-height:17.06px;color:#1f2430;transform:scaleX(1.0245);transform-origin:0 50%;">Joinery</span>
<span class="t " style="left:284.20px;top:99px;font-size:13.125px;line-height:17.06px;color:#1f2430;">6</span>
<span class="t " style="left:393.30px;top:99px;font-size:13.125px;line-height:17.06px;color:#1f2430;">48</span>
<span class="t " style="left:508.70px;top:99px;font-size:13.125px;line-height:17.06px;color:#1f2430;">6</span>
<span class="t " style="left:623.20px;top:99px;font-size:13.125px;line-height:17.06px;color:#2ecc71;-webkit-text-stroke:0.45px #2ecc71;">48</span>
<span class="t " style="left:776.50px;top:99px;font-size:13.125px;line-height:17.06px;color:#2ecc71;-webkit-text-stroke:0.45px #2ecc71;">48</span>
<span class="t " style="left:929.80px;top:99px;font-size:13.125px;line-height:17.06px;color:#2ecc71;-webkit-text-stroke:0.45px #2ecc71;">48</span>
<span class="t " style="left:1083.10px;top:99px;font-size:13.125px;line-height:17.06px;color:#2ecc71;-webkit-text-stroke:0.45px #2ecc71;">48</span>
<span class="t " style="left:1236.40px;top:99px;font-size:13.125px;line-height:17.06px;color:#2ecc71;-webkit-text-stroke:0.45px #2ecc71;">48</span>
<span class="t " style="left:1389.70px;top:99px;font-size:13.125px;line-height:17.06px;color:#2ecc71;-webkit-text-stroke:0.45px #2ecc71;">48</span>
<span class="t " style="left:1543.00px;top:99px;font-size:13.125px;line-height:17.06px;color:#2ecc71;-webkit-text-stroke:0.45px #2ecc71;">48</span>
<span class="t " style="left:20.00px;top:130px;font-size:13.125px;line-height:17.06px;color:#1f2430;transform:scaleX(0.9940);transform-origin:0 50%;">Rigging</span>
<span class="t " style="left:284.20px;top:130px;font-size:13.125px;line-height:17.06px;color:#1f2430;">4</span>
<span class="t " style="left:393.30px;top:130px;font-size:13.125px;line-height:17.06px;color:#1f2430;">32</span>
<span class="t " style="left:508.70px;top:130px;font-size:13.125px;line-height:17.06px;color:#1f2430;">0</span>
<span class="t " style="left:623.20px;top:130px;font-size:13.125px;line-height:17.06px;color:#2ecc71;-webkit-text-stroke:0.45px #2ecc71;">32</span>
<span class="t " style="left:776.50px;top:130px;font-size:13.125px;line-height:17.06px;color:#2ecc71;-webkit-text-stroke:0.45px #2ecc71;">32</span>
<span class="t " style="left:929.80px;top:130px;font-size:13.125px;line-height:17.06px;color:#2ecc71;-webkit-text-stroke:0.45px #2ecc71;">32</span>
<span class="t " style="left:1083.10px;top:130px;font-size:13.125px;line-height:17.06px;color:#2ecc71;-webkit-text-stroke:0.45px #2ecc71;">32</span>
<span class="t " style="left:1236.40px;top:130px;font-size:13.125px;line-height:17.06px;color:#2ecc71;-webkit-text-stroke:0.45px #2ecc71;">32</span>
<span class="t " style="left:1389.70px;top:130px;font-size:13.125px;line-height:17.06px;color:#2ecc71;-webkit-text-stroke:0.45px #2ecc71;">32</span>
<span class="t " style="left:1543.00px;top:130px;font-size:13.125px;line-height:17.06px;color:#2ecc71;-webkit-text-stroke:0.45px #2ecc71;">32</span>
<span class="t " style="left:20.00px;top:161px;font-size:13.125px;line-height:17.06px;color:#1f2430;transform:scaleX(1.0067);transform-origin:0 50%;">Systems</span>
<span class="t " style="left:284.20px;top:161px;font-size:13.125px;line-height:17.06px;color:#1f2430;">4</span>
<span class="t " style="left:393.30px;top:161px;font-size:13.125px;line-height:17.06px;color:#1f2430;">32</span>
<span class="t " style="left:508.70px;top:161px;font-size:13.125px;line-height:17.06px;color:#1f2430;">0</span>
<span class="t " style="left:623.20px;top:161px;font-size:13.125px;line-height:17.06px;color:#2ecc71;-webkit-text-stroke:0.45px #2ecc71;">32</span>
<span class="t " style="left:776.50px;top:161px;font-size:13.125px;line-height:17.06px;color:#2ecc71;-webkit-text-stroke:0.45px #2ecc71;">32</span>
<span class="t " style="left:929.80px;top:161px;font-size:13.125px;line-height:17.06px;color:#2ecc71;-webkit-text-stroke:0.45px #2ecc71;">32</span>
<span class="t " style="left:1083.10px;top:161px;font-size:13.125px;line-height:17.06px;color:#2ecc71;-webkit-text-stroke:0.45px #2ecc71;">32</span>
<span class="t " style="left:1236.40px;top:161px;font-size:13.125px;line-height:17.06px;color:#2ecc71;-webkit-text-stroke:0.45px #2ecc71;">32</span>
<span class="t " style="left:1389.70px;top:161px;font-size:13.125px;line-height:17.06px;color:#2ecc71;-webkit-text-stroke:0.45px #2ecc71;">32</span>
<span class="t " style="left:1543.00px;top:161px;font-size:13.125px;line-height:17.06px;color:#2ecc71;-webkit-text-stroke:0.45px #2ecc71;">32</span>
<span class="t " style="left:20.00px;top:192px;font-size:13.125px;line-height:17.06px;color:#1f2430;transform:scaleX(1.0310);transform-origin:0 50%;">Welding and fabrication</span>
<span class="t " style="left:284.20px;top:192px;font-size:13.125px;line-height:17.06px;color:#1f2430;">2</span>
<span class="t " style="left:393.30px;top:192px;font-size:13.125px;line-height:17.06px;color:#1f2430;">16</span>
<span class="t " style="left:508.70px;top:192px;font-size:13.125px;line-height:17.06px;color:#1f2430;">0</span>
<span class="t " style="left:623.20px;top:192px;font-size:13.125px;line-height:17.06px;color:#2ecc71;-webkit-text-stroke:0.45px #2ecc71;">16</span>
<span class="t " style="left:776.50px;top:192px;font-size:13.125px;line-height:17.06px;color:#2ecc71;-webkit-text-stroke:0.45px #2ecc71;">16</span>
<span class="t " style="left:929.80px;top:192px;font-size:13.125px;line-height:17.06px;color:#2ecc71;-webkit-text-stroke:0.45px #2ecc71;">16</span>
<span class="t " style="left:1083.10px;top:192px;font-size:13.125px;line-height:17.06px;color:#2ecc71;-webkit-text-stroke:0.45px #2ecc71;">16</span>
<span class="t " style="left:1236.40px;top:192px;font-size:13.125px;line-height:17.06px;color:#2ecc71;-webkit-text-stroke:0.45px #2ecc71;">16</span>
<span class="t " style="left:1389.70px;top:192px;font-size:13.125px;line-height:17.06px;color:#2ecc71;-webkit-text-stroke:0.45px #2ecc71;">16</span>
<span class="t " style="left:1543.00px;top:192px;font-size:13.125px;line-height:17.06px;color:#2ecc71;-webkit-text-stroke:0.45px #2ecc71;">16</span>
<span class="t " style="left:20.00px;top:223px;font-size:13.125px;line-height:17.06px;color:#1f2430;transform:scaleX(1.0053);transform-origin:0 50%;">Yard Operations</span>
<span class="t " style="left:284.20px;top:223px;font-size:13.125px;line-height:17.06px;color:#1f2430;">7</span>
<span class="t " style="left:393.30px;top:223px;font-size:13.125px;line-height:17.06px;color:#1f2430;">56</span>
<span class="t " style="left:508.70px;top:223px;font-size:13.125px;line-height:17.06px;color:#1f2430;">0</span>
<span class="t " style="left:623.20px;top:223px;font-size:13.125px;line-height:17.06px;color:#2ecc71;-webkit-text-stroke:0.45px #2ecc71;">56</span>
<span class="t " style="left:776.50px;top:223px;font-size:13.125px;line-height:17.06px;color:#2ecc71;-webkit-text-stroke:0.45px #2ecc71;">56</span>
<span class="t " style="left:929.80px;top:223px;font-size:13.125px;line-height:17.06px;color:#2ecc71;-webkit-text-stroke:0.45px #2ecc71;">56</span>
<span class="t " style="left:1083.10px;top:223px;font-size:13.125px;line-height:17.06px;color:#2ecc71;-webkit-text-stroke:0.45px #2ecc71;">56</span>
<span class="t " style="left:1236.40px;top:223px;font-size:13.125px;line-height:17.06px;color:#2ecc71;-webkit-text-stroke:0.45px #2ecc71;">56</span>
<span class="t " style="left:1389.70px;top:223px;font-size:13.125px;line-height:17.06px;color:#2ecc71;-webkit-text-stroke:0.45px #2ecc71;">56</span>
<span class="t " style="left:1543.00px;top:223px;font-size:13.125px;line-height:17.06px;color:#2ecc71;-webkit-text-stroke:0.45px #2ecc71;">56</span>
<span class="t " style="left:20.00px;top:254px;font-size:13.125px;line-height:17.06px;color:#1f2430;transform:scaleX(1.0321);transform-origin:0 50%;">Subcontractors</span>
<span class="t " style="left:284.20px;top:254px;font-size:13.125px;line-height:17.06px;color:#1f2430;">4</span>
<span class="t " style="left:393.30px;top:254px;font-size:13.125px;line-height:17.06px;color:#1f2430;">32</span>
<span class="t " style="left:508.70px;top:254px;font-size:13.125px;line-height:17.06px;color:#1f2430;">0</span>
<span class="t " style="left:623.20px;top:254px;font-size:13.125px;line-height:17.06px;color:#2ecc71;-webkit-text-stroke:0.45px #2ecc71;">32</span>
<span class="t " style="left:776.50px;top:254px;font-size:13.125px;line-height:17.06px;color:#2ecc71;-webkit-text-stroke:0.45px #2ecc71;">32</span>
<span class="t " style="left:929.80px;top:254px;font-size:13.125px;line-height:17.06px;color:#2ecc71;-webkit-text-stroke:0.45px #2ecc71;">32</span>
<span class="t " style="left:1083.10px;top:254px;font-size:13.125px;line-height:17.06px;color:#2ecc71;-webkit-text-stroke:0.45px #2ecc71;">32</span>
<span class="t " style="left:1236.40px;top:254px;font-size:13.125px;line-height:17.06px;color:#2ecc71;-webkit-text-stroke:0.45px #2ecc71;">32</span>
<span class="t " style="left:1389.70px;top:254px;font-size:13.125px;line-height:17.06px;color:#2ecc71;-webkit-text-stroke:0.45px #2ecc71;">32</span>
<span class="t " style="left:1543.00px;top:254px;font-size:13.125px;line-height:17.06px;color:#2ecc71;-webkit-text-stroke:0.45px #2ecc71;">32</span>
<span class="t " style="left:20.00px;top:285px;font-size:13.125px;line-height:17.06px;color:#1f2430;transform:scaleX(1.0251);transform-origin:0 50%;">Project management</span>
<span class="t " style="left:284.20px;top:285px;font-size:13.125px;line-height:17.06px;color:#1f2430;">11</span>
<span class="t " style="left:393.30px;top:285px;font-size:13.125px;line-height:17.06px;color:#1f2430;">88</span>
<span class="t " style="left:508.70px;top:285px;font-size:13.125px;line-height:17.06px;color:#1f2430;">0</span>
<span class="t " style="left:623.20px;top:285px;font-size:13.125px;line-height:17.06px;color:#2ecc71;-webkit-text-stroke:0.45px #2ecc71;">88</span>
<span class="t " style="left:776.50px;top:285px;font-size:13.125px;line-height:17.06px;color:#2ecc71;-webkit-text-stroke:0.45px #2ecc71;">88</span>
<span class="t " style="left:929.80px;top:285px;font-size:13.125px;line-height:17.06px;color:#2ecc71;-webkit-text-stroke:0.45px #2ecc71;">88</span>
<span class="t " style="left:1083.10px;top:285px;font-size:13.125px;line-height:17.06px;color:#2ecc71;-webkit-text-stroke:0.45px #2ecc71;">88</span>
<span class="t " style="left:1236.40px;top:285px;font-size:13.125px;line-height:17.06px;color:#2ecc71;-webkit-text-stroke:0.45px #2ecc71;">88</span>
<span class="t " style="left:1389.70px;top:285px;font-size:13.125px;line-height:17.06px;color:#2ecc71;-webkit-text-stroke:0.45px #2ecc71;">88</span>
<span class="t " style="left:1543.00px;top:285px;font-size:13.125px;line-height:17.06px;color:#2ecc71;-webkit-text-stroke:0.45px #2ecc71;">88</span>
</div>
<div class="abs" style="left:1681.3px;top:639.8px;width:17.7px;height:330px;background:#fafafc;"></div>
<svg style="left:0;top:0" width="1699" height="968">
<polygon points="1690.50,647.20 1685.20,654.90 1695.80,654.90" fill="#8b8b8b" stroke="#8b8b8b" stroke-width="1.6" stroke-linejoin="round"/>
<rect x="1685.1" y="662.8" width="11" height="282.4" rx="5.5" fill="#8b8b8b"/>
<polygon points="1690.50,968.50 1685.20,962.00 1695.80,962.00" fill="#8b8b8b" stroke="#8b8b8b" stroke-width="1.6" stroke-linejoin="round"/>
</svg>
</body></html>
